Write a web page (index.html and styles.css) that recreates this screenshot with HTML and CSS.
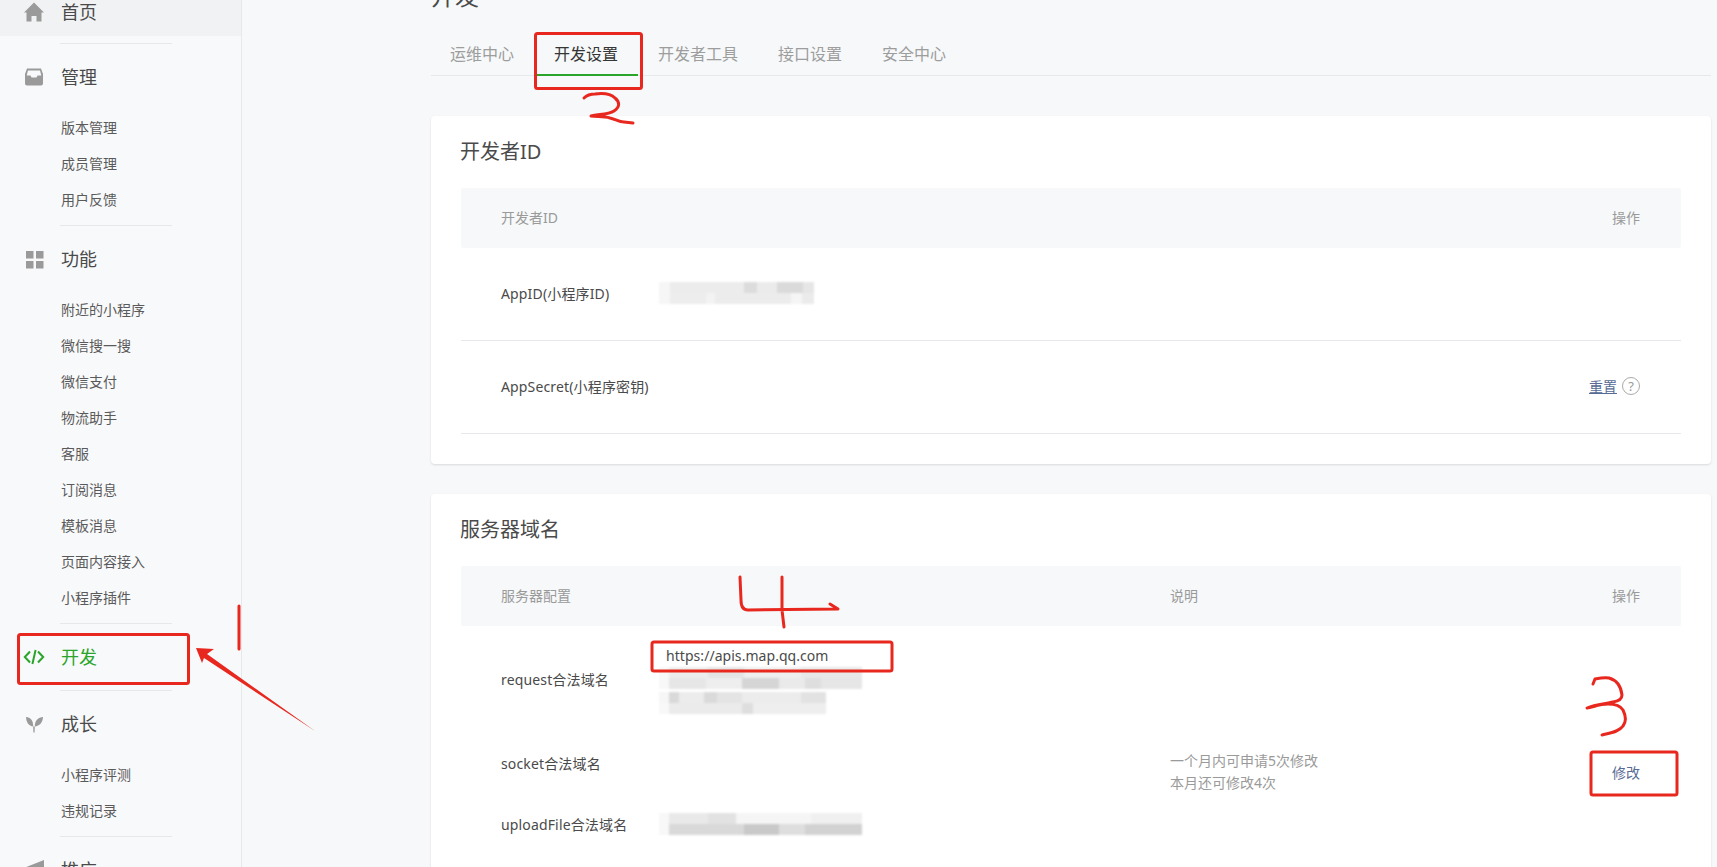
FILE: index.html
```html
<!DOCTYPE html>
<html lang="zh-CN">
<head>
<meta charset="utf-8">
<title>开发设置</title>
<link rel="stylesheet" href="styles.css">
</head>
<body>
<aside class="sidebar">
  <nav class="nav">
    <a class="nav-title nav-home">
      <svg class="nav-icon" viewBox="0 0 22 22"><path d="M11 1.5 21 11.5H18.5V20.5H13.5V15H8.5V20.5H3.5V11.5H1Z"/></svg>
      <span>首页</span>
    </a>
    <hr class="nav-rule">
    <a class="nav-title">
      <svg class="nav-icon" viewBox="0 0 22 22"><path fill-rule="evenodd" d="M4 2.5H18L20 8V17.5A2 2 0 0 1 18 19.5H4A2 2 0 0 1 2 17.5V8ZM5 4.5 3.7 9.5H7.5L8.5 11.5H13.5L14.5 9.5H18.3L17 4.5Z"/></svg>
      <span>管理</span>
    </a>
    <ul class="nav-sub">
      <li>版本管理</li>
      <li>成员管理</li>
      <li>用户反馈</li>
    </ul>
    <hr class="nav-rule">
    <a class="nav-title">
      <svg class="nav-icon" viewBox="0 0 22 22"><path d="M3 3h7.5v7.5H3zM13 3h7.5v7.5H13zM3 13h7.5v7.5H3zM13 13h7.5v7.5H13z"/></svg>
      <span>功能</span>
    </a>
    <ul class="nav-sub">
      <li>附近的小程序</li>
      <li>微信搜一搜</li>
      <li>微信支付</li>
      <li>物流助手</li>
      <li>客服</li>
      <li>订阅消息</li>
      <li>模板消息</li>
      <li>页面内容接入</li>
      <li>小程序插件</li>
    </ul>
    <hr class="nav-rule">
    <a class="nav-title nav-active">
      <svg class="nav-icon" viewBox="0 0 22 22"><path class="code-stroke" d="M7 5.5 1.8 11 7 16.5M15 5.5 20.2 11 15 16.5M12.6 4 9.4 18"/></svg>
      <span>开发</span>
    </a>
    <hr class="nav-rule">
    <a class="nav-title">
      <svg class="nav-icon" viewBox="0 0 22 22"><path d="M3 4C7.5 4.3 10.2 7 10.2 13.5 6 13 3.2 9.5 3 4ZM20 4C15.5 4.3 11.8 7 11.8 13.5 16.5 13 19.8 9.5 20 4ZM10.2 13.5H11.8L11.6 19.5H10.4Z"/></svg>
      <span>成长</span>
    </a>
    <ul class="nav-sub">
      <li>小程序评测</li>
      <li>违规记录</li>
    </ul>
    <hr class="nav-rule">
    <a class="nav-title">
      <svg class="nav-icon" viewBox="0 0 22 22"><path d="M2 8.5 21 1V21L2 14.5Z"/></svg>
      <span>推广</span>
    </a>
  </nav>
</aside>

<main class="main">
  <h1 class="page-title">开发</h1>
  <ul class="tabs">
    <li class="tab">运维中心</li>
    <li class="tab tab-active">开发设置</li>
    <li class="tab">开发者工具</li>
    <li class="tab">接口设置</li>
    <li class="tab">安全中心</li>
  </ul>

  <section class="card">
    <h2 class="card-title">开发者ID</h2>
    <div class="table">
      <div class="row row-head">
        <div class="col-label">开发者ID</div>
        <div class="col-action">操作</div>
      </div>
      <div class="row row-line">
        <div class="col-label">AppID(小程序ID)</div>
        <div class="col-value"><div class="mosaic mosaic-short"></div></div>
      </div>
      <div class="row row-line">
        <div class="col-label">AppSecret(小程序密钥)</div>
        <div class="col-action action-reset">
          <a class="link link-under">重置</a>
          <span class="help">?</span>
        </div>
      </div>
    </div>
  </section>

  <section class="card">
    <h2 class="card-title">服务器域名</h2>
    <div class="table">
      <div class="row row-head">
        <div class="col-label">服务器配置</div>
        <div class="col-note">说明</div>
        <div class="col-action">操作</div>
      </div>
      <div class="domain-grid">
        <div class="domain-label domain-r1">request合法域名</div>
        <div class="domain-value domain-r1">
          <div class="url">https://apis.map.qq.com</div>
          <div class="mosaic mosaic-long"></div>
          <div class="mosaic mosaic-mid"></div>
        </div>
        <div class="domain-label domain-r2">socket合法域名</div>
        <div class="domain-label domain-r3">uploadFile合法域名</div>
        <div class="domain-value domain-r3"><div class="mosaic mosaic-long mosaic-alt"></div></div>
        <div class="domain-note">一个月内可申请5次修改<br>本月还可修改4次</div>
        <div class="domain-action"><a class="link">修改</a></div>
      </div>
    </div>
  </section>
</main>

<svg class="marks" width="1717" height="867" viewBox="0 0 1717 867">
  <rect class="mark" x="18.5" y="634.5" width="170" height="49" rx="2"/>
  <rect class="mark" x="535.5" y="33.5" width="106" height="55" rx="2"/>
  <rect class="mark" x="652" y="642" width="240" height="29" rx="2"/>
  <rect class="mark" x="1591" y="752" width="86" height="43" rx="2"/>
  <path class="mark mark-line" d="M239 606V649"/>
  <path class="mark-fill" d="M196 648 214 649 207 654 315 731 204 658 202 663Z"/>
  <path class="mark mark-pen" d="M584 98C587 95 591 94 595 94C603 93 611 94 615 98C620 102 620 107 614 111C608 115 598 114 591 116C597 117 603 116 610 118C615 119 619 122 624 122L633 123"/>
  <path class="mark mark-pen" d="M1593 684 1595 679C1600 678 1605 677 1609 678C1616 680 1621 686 1622 695C1622 699 1619 701 1613 702C1606 704 1596 704 1587 708C1593 707 1600 704 1608 704C1615 704 1620 705 1623 710C1626 716 1626 722 1623 726C1619 732 1610 733 1602 735"/>
  <path class="mark mark-pen" d="M740 577 741 600C741 606 743 610 748 610L838 609 830 604M782 577V610L784 627"/>
</svg>
</body>
</html>
```

FILE: styles.css
```css
* { box-sizing: border-box; }

html, body {
  height: 100%;
  margin: 0;
  overflow: hidden;
}

body {
  display: flex;
  position: relative;
  background: #f6f8f9;
  color: #4a4a4a;
  font-family: "Noto Sans", "Noto Sans CJK SC", sans-serif;
  font-size: 14px;
}

ul { list-style: none; margin: 0; padding: 0; }

/* sidebar */
.sidebar {
  flex: 0 0 242px;
  height: 867px;
  overflow: hidden;
  background: #f8f9fb;
  border-right: 1px solid #e7e8ec;
}

.nav { margin-top: -22px; }

.nav-title {
  display: flex;
  align-items: center;
  height: 36px;
  margin: 15px 0;
  padding-left: 23px;
  color: #4a4a4a;
  font-size: 18px;
  line-height: 36px;
}

.nav-home {
  height: 58px;
  margin: 0 0 7px;
  padding-top: 16px;
  padding-bottom: 6px;
  background: #f1f2f4;
}

.nav-icon {
  flex: none;
  width: 22px;
  height: 22px;
  margin-right: 16px;
  fill: #9a9a9a;
}

.nav-active { color: #2aa52a; }

.code-stroke {
  fill: none;
  stroke: #2aa52a;
  stroke-width: 2;
}

.nav-sub li {
  height: 36px;
  padding-left: 61px;
  color: #5a5a5a;
  font-size: 14px;
  line-height: 36px;
}

.nav-sub { padding-bottom: 7px; }

.nav-rule {
  width: 112px;
  height: 1px;
  margin: 0 0 0 60px;
  border: 0;
  background: #e7e8ec;
}

/* main */
.main {
  flex: 1;
  min-width: 0;
  padding: 0 6px 0 189px;
}

.page-title {
  height: 36px;
  margin: -22px 0 19px;
  color: #4a4a4a;
  font-size: 24px;
  font-weight: 400;
  line-height: 36px;
}

.tabs {
  display: flex;
  gap: 40px;
  height: 43px;
  margin-bottom: 40px;
  padding-left: 19px;
  border-bottom: 1px solid #e7e8ec;
}

.tab {
  position: relative;
  height: 43px;
  color: #9d9d9d;
  font-size: 16px;
  line-height: 42px;
}

.tab-active { color: #353535; }

.tab-active::after {
  content: "";
  position: absolute;
  left: -20px;
  right: -20px;
  bottom: 0;
  height: 2px;
  background: #2aa52a;
}

.card {
  margin-bottom: 30px;
  padding: 0 30px 30px;
  background: #fff;
  border-radius: 4px;
  box-shadow: 0 1px 2px rgba(150, 150, 150, 0.3);
}

.card-title {
  margin: 0 0 0 -1px;
  color: #4a4a4a;
  font-size: 20px;
  font-weight: 400;
  line-height: 72px;
}

.row {
  display: grid;
  grid-template-columns: 158px 511px 1fr auto;
  align-items: center;
  padding: 0 41px 2px 40px;
}

.row-head {
  height: 60px;
  background: #f6f8f9;
  color: #9a9a9a;
  border-radius: 2px;
}

.row-line {
  height: 93px;
  border-bottom: 1px solid #e7e8ec;
}

.col-label {
  grid-column: 1;
  letter-spacing: 0.15px;
  white-space: nowrap;
}

.row-head .col-label { letter-spacing: 0; }

.col-value { grid-column: 2; margin-left: 1px; }
.col-note { grid-column: 3; }
.col-action { grid-column: 4; }

.action-reset {
  display: flex;
  align-items: center;
  gap: 5px;
}

.link { color: #576b95; }
.link-under { text-decoration: underline; }

.help {
  width: 18px;
  height: 18px;
  border: 1px solid #aaa;
  border-radius: 50%;
  color: #999;
  font-size: 13px;
  line-height: 16px;
  text-align: center;
}

.domain-grid {
  display: grid;
  grid-template-columns: 158px 511px 1fr auto;
  grid-template-rows: 106px 62px 60px 66px;
  align-items: center;
  padding: 0 41px 0 40px;
}

.domain-r1 { grid-row: 1; }
.domain-r2 { grid-row: 2; }
.domain-r3 { grid-row: 3; }

.domain-label {
  grid-column: 1;
  letter-spacing: 0.15px;
  white-space: nowrap;
}

.domain-value { grid-column: 2; margin-left: 1px; }

.url {
  height: 23px;
  padding-left: 6px;
  letter-spacing: 0.05px;
  line-height: 23px;
}

.domain-note {
  grid-column: 3;
  grid-row: 1 / 5;
  margin-bottom: 2px;
  color: #9a9a9a;
  line-height: 22px;
}

.domain-action {
  grid-column: 4;
  grid-row: 1 / 5;
  margin-bottom: 2px;
}

/* blurred values */
.mosaic {
  height: 22px;
  margin-left: -1px;
  filter: blur(1px);
  background-color: #f1f1f1;
  background-repeat: no-repeat;
  background-size: 100% 50%;
  background-position: 0 0, 0 100%;
}

.mosaic-short {
  width: 155px;
  background-image:
    linear-gradient(90deg, #f6f6f6 0 7%, #ececec 7% 55%, #dcdcdc 55% 63%, #ebebeb 63% 76%, #dadada 76% 93%, #e6e6e6 93%),
    linear-gradient(90deg, #f6f6f6 0 7%, #ededed 7% 30%, #f3f3f3 30% 36%, #ececec 36% 85%, #f5f5f5 85% 92%, #ebebeb 92%);
}

.mosaic-long {
  width: 203px;
  margin-bottom: 3px;
  background-image:
    linear-gradient(90deg, #f8f8f8 0 5%, #ededed 5% 24%, #e4e4e4 24% 42%, #efefef 42% 70%, #e8e8e8 70%),
    linear-gradient(90deg, #f8f8f8 0 5%, #e6e6e6 5% 23%, #eeeeee 23% 41%, #d5d5d5 41% 59%, #eaeaea 59% 72%, #dedede 72% 80%, #e6e6e6 80%);
}

.mosaic-mid {
  width: 167px;
  background-image:
    linear-gradient(90deg, #f6f6f6 0 6%, #d9d9d9 6% 12%, #ececec 12% 27%, #dadada 27% 35%, #e4e4e4 35% 50%, #ececec 50% 85%, #e2e2e2 85%),
    linear-gradient(90deg, #f8f8f8 0 6%, #ebebeb 6% 50%, #dedede 50% 56%, #eeeeee 56%);
}

.mosaic-alt {
  margin-top: 2px;
  margin-bottom: 3px;
  background-image:
    linear-gradient(90deg, #f8f8f8 0 5%, #e9e9e9 5% 24%, #e2e2e2 24% 38%, #f5f5f5 38% 75%, #f0f0f0 75%),
    linear-gradient(90deg, #f8f8f8 0 5%, #d9d9d9 5% 42%, #c9c9c9 42% 59%, #dedede 59% 72%, #d2d2d2 72%);
}

/* red hand-drawn annotations over the page */
.marks {
  position: absolute;
  top: 0;
  left: 0;
  pointer-events: none;
}

.mark {
  fill: none;
  stroke: #e8281f;
  stroke-width: 3;
}

.mark-line { stroke-linecap: round; }

.mark-pen {
  stroke-linecap: round;
  stroke-linejoin: round;
}

.mark-fill { fill: #e8281f; }
```
